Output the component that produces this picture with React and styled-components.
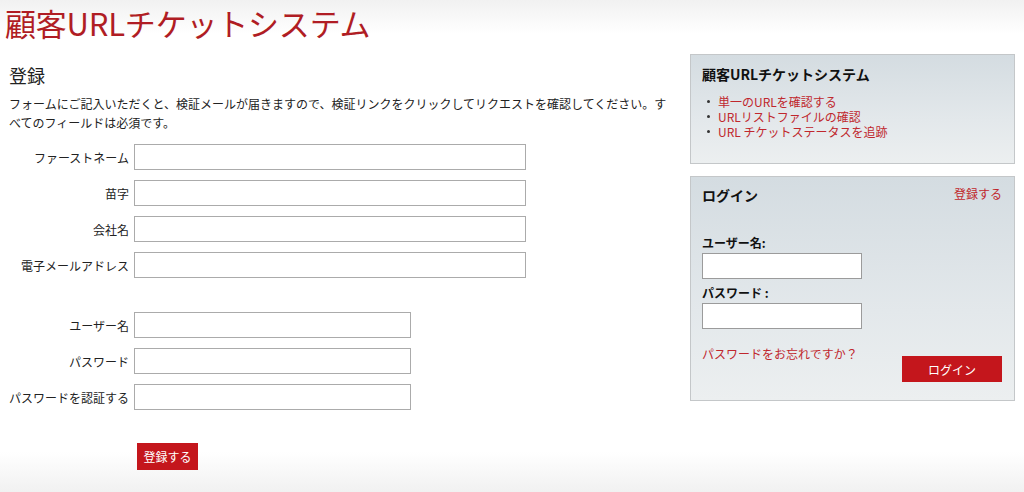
import styled, { createGlobalStyle } from "styled-components";

const GlobalStyle = createGlobalStyle`
  html, body {
    margin: 0;
    padding: 0;
  }
  body {
    font-family: "Noto Sans CJK JP", "Liberation Sans", sans-serif;
    color: #222;
    font-size: 12px;
  }
  * {
    box-sizing: border-box;
  }
`;

const signupFields = [
  { label: "ファーストネーム", wide: true },
  { label: "苗字", wide: true },
  { label: "会社名", wide: true },
  { label: "電子メールアドレス", wide: true },
  { label: "ユーザー名", wide: false, spaced: true },
  { label: "パスワード", wide: false, type: "password" },
  { label: "パスワードを認証する", wide: false, type: "password" },
];

const links = ["単一のURLを確認する", "URLリストファイルの確認", "URL チケットステータスを追跡"];

function App() {
  return (
    <Page>
      <GlobalStyle />
      <Header>
        <SiteTitle>顧客URLチケットシステム</SiteTitle>
      </Header>
      <Main>
        <Content>
          <Heading>登録</Heading>
          <Intro>
            フォームにご記入いただくと、検証メールが届きますので、検証リンクをクリックしてリクエストを確認してください。すべてのフィールドは必須です。
          </Intro>
          <Form>
            {signupFields.map((f) => (
              <FieldRow key={f.label} $spaced={f.spaced}>
                <Label>{f.label}</Label>
                <TextInput type={f.type || "text"} $wide={f.wide} />
              </FieldRow>
            ))}
            <SubmitRow>
              <RedButton type="button" $small>
                登録する
              </RedButton>
            </SubmitRow>
          </Form>
        </Content>

        <Sidebar>
          <Panel $pad="10px 12px 24px 11px">
            <PanelTitle>顧客URLチケットシステム</PanelTitle>
            <LinkList>
              {links.map((l) => (
                <li key={l}>
                  <RedLink href="#">{l}</RedLink>
                </li>
              ))}
            </LinkList>
          </Panel>

          <Panel $pad="9px 12px 18px 11px">
            <PanelHead>
              <PanelTitle>ログイン</PanelTitle>
              <RedLink href="#">登録する</RedLink>
            </PanelHead>
            <LoginLabel>ユーザー名:</LoginLabel>
            <LoginInput type="text" />
            <LoginLabel $tight>パスワード :</LoginLabel>
            <LoginInput type="password" />
            <LoginFoot>
              <RedLink href="#">パスワードをお忘れですか？</RedLink>
              <RedButton type="button">ログイン</RedButton>
            </LoginFoot>
          </Panel>
        </Sidebar>
      </Main>
    </Page>
  );
}

export default App;

const Page = styled.div`
  min-height: 100vh;
  background: linear-gradient(
    to bottom,
    #f1f1f1 0,
    #ffffff 34px,
    #ffffff calc(100% - 40px),
    #f1f1f1 100%
  );
`;

const Header = styled.header`
  height: 54px;
  padding: 0 0 0 5px;
`;

const SiteTitle = styled.h1`
  margin: 0;
  font-size: 31px;
  font-weight: 400;
  line-height: 45px;
  color: #b01d24;
  letter-spacing: -0.2px;
`;

const Main = styled.main`
  display: flex;
  align-items: flex-start;
  padding-right: 9px;
`;

const Content = styled.section`
  flex: 0 0 690px;
  padding: 8px 20px 0 9px;
`;

const Heading = styled.h2`
  margin: 0;
  font-size: 18px;
  font-weight: 400;
  line-height: 26px;
  color: #222;
`;

const Intro = styled.p`
  margin: 6px 0 0;
  font-size: 12px;
  line-height: 19px;
  color: #222;
`;

const Form = styled.form`
  display: flex;
  flex-direction: column;
  gap: 10px;
  margin-top: 12px;
`;

const FieldRow = styled.div`
  display: grid;
  grid-template-columns: 120px auto;
  column-gap: 5px;
  align-items: center;
  margin-top: ${(p) => (p.$spaced ? "24px" : "0")};
`;

const Label = styled.label`
  text-align: right;
  font-size: 12px;
  white-space: nowrap;
  color: #222;
`;

const TextInput = styled.input`
  width: ${(p) => (p.$wide ? "392px" : "277px")};
  height: 26px;
  border: 1px solid #ababab;
  background: #fff;
  padding: 2px 4px;
  font: inherit;
`;

const SubmitRow = styled.div`
  padding: 23px 0 0 128px;
`;

const RedButton = styled.button`
  border: none;
  background: #c4161c;
  color: #fff;
  font-family: inherit;
  font-size: 12px;
  cursor: pointer;
  width: ${(p) => (p.$small ? "61px" : "100px")};
  height: ${(p) => (p.$small ? "27px" : "26px")};
  padding: 0;
`;

const Sidebar = styled.aside`
  flex: 0 0 325px;
  display: flex;
  flex-direction: column;
  gap: 12px;
`;

const Panel = styled.div`
  border: 1px solid #c4c7c9;
  background: linear-gradient(to bottom, #d4dce1 0%, #e3e8eb 60%, #eceff0 100%);
  padding: ${(p) => p.$pad};
`;

const PanelTitle = styled.h3`
  margin: 0;
  font-size: 14px;
  font-weight: 700;
  line-height: 18px;
  color: #111;
`;

const PanelHead = styled.div`
  display: flex;
  justify-content: space-between;
  align-items: flex-start;
  margin-bottom: 31px;
`;

const LinkList = styled.ul`
  margin: 11px 0 0;
  padding: 0 0 0 16px;
  list-style: none;

  li {
    position: relative;
    font-size: 12px;
    line-height: 15px;
  }
  li::before {
    content: "";
    position: absolute;
    left: -11px;
    top: 6px;
    width: 3px;
    height: 3px;
    border-radius: 50%;
    background: #333;
  }
`;

const RedLink = styled.a`
  color: #c0272d;
  text-decoration: none;
  font-size: 12px;
  line-height: 15px;
`;

const LoginLabel = styled.div`
  font-size: 12px;
  font-weight: 700;
  line-height: 16px;
  margin: ${(p) => (p.$tight ? "6px 0 2px" : "0 0 2px")};
  color: #111;
`;

const LoginInput = styled.input`
  display: block;
  width: 160px;
  height: 26px;
  border: 1px solid #9b9b9b;
  background: #fff;
  padding: 2px 4px;
  font: inherit;
`;

const LoginFoot = styled.div`
  display: flex;
  justify-content: space-between;
  align-items: flex-start;
  margin-top: 17px;

  ${RedButton} {
    margin-top: 10px;
  }
`;
